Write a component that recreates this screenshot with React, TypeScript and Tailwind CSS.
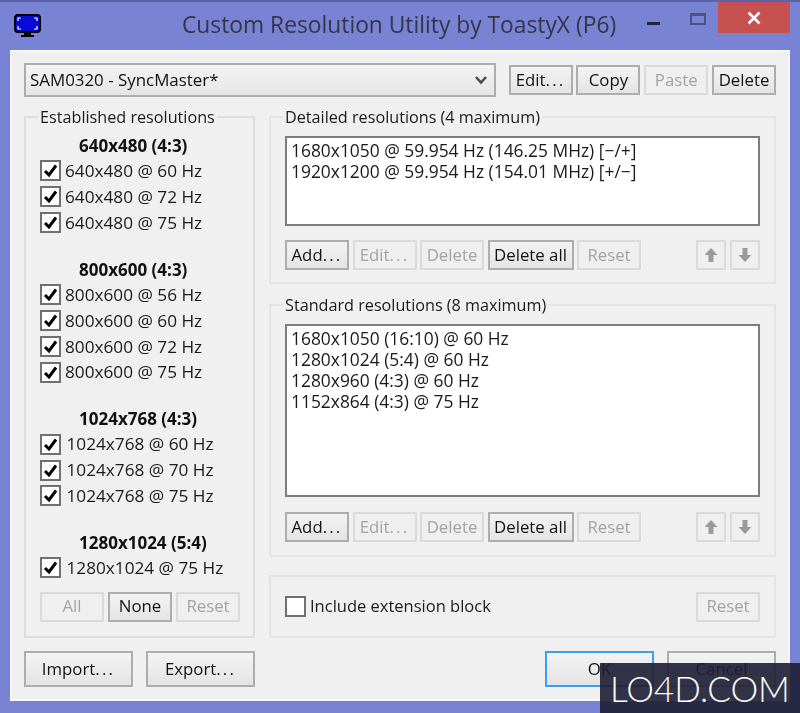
import React from "react";

const font = { fontFamily: '"Open Sans", "Noto Sans", sans-serif' };

function Btn({ w, h = "h-[30px]", label, disabled, focused, children }: { w: string; h?: string; label?: string; disabled?: boolean; focused?: boolean; children?: React.ReactNode }) {
  const tone = disabled
    ? "border-[#dadada] bg-[#efefef] text-[#a3a3a3]"
    : focused
    ? "border-[#3c9df5] bg-gradient-to-b from-[#f3f3f3] to-[#e4e4e4] text-[#111]"
    : "border-[#adadad] bg-gradient-to-b from-[#f3f3f3] to-[#e4e4e4] text-[#111]";
  const dots = label?.endsWith("...");
  return (
    <div className={`${w} ${h} ${tone} shrink-0 border-2 flex items-center justify-center text-[16.8px] leading-none`}>
      {dots ? (
        <>
          {label!.slice(0, -3)}
          <span className="tracking-[2.2px]">...</span>
        </>
      ) : (
        label
      )}
      {children}
    </div>
  );
}

function Check({ checked = true }: { checked?: boolean }) {
  return (
    <div className="w-[21px] h-[21px] shrink-0 border-2 border-[#707070] bg-white flex items-center justify-center">
      {checked && (
        <svg width="15" height="15" viewBox="0 0 15 15">
          <path d="M2 8 L6 12 L13 2.5" fill="none" stroke="#000" strokeWidth="3" />
        </svg>
      )}
    </div>
  );
}

function Row({ label, gap = "gap-[4px]" }: { label: string; gap?: string }) {
  return (
    <div className={`h-[25.9px] flex items-center ${gap} text-[17.2px] text-[#1a1a1a]`}>
      <Check />
      <span>{label}</span>
    </div>
  );
}

function Block({ title, rows, gap }: { title: string; rows: string[]; gap?: string }) {
  return (
    <div className="flex flex-col">
      <div className="h-[24px] flex items-center pl-[39px] text-[17px] font-bold text-[#111]">{title}</div>
      {rows.map((r) => (
        <Row key={r} label={r} gap={gap} />
      ))}
    </div>
  );
}

function Legend({ text }: { text: string }) {
  return <div className="-mt-[12px] w-fit px-[2px] -ml-[2px] bg-[#f0f0f0] text-[16.2px] leading-[22px] text-[#1a1a1a]">{text}</div>;
}

function Arrow({ down }: { down?: boolean }) {
  return (
    <svg width="14" height="16" viewBox="0 0 14 16" className={down ? "rotate-180" : ""}>
      <path d="M7 1 L13.5 8 H9.5 V15 H4.5 V8 H0.5 Z" fill="#9a9a9a" />
    </svg>
  );
}

function ActionRow() {
  return (
    <div className="flex gap-[3.5px]">
      <Btn w="w-[64px]" label="Add..." />
      <Btn w="w-[64px]" label="Edit..." disabled />
      <Btn w="w-[64px]" label="Delete" disabled />
      <Btn w="w-[86px]" label="Delete all" />
      <Btn w="w-[64px]" label="Reset" disabled />
      <div className="ml-auto flex gap-[4px]">
        <Btn w="w-[30px]" disabled>
          <Arrow />
        </Btn>
        <Btn w="w-[30px]" disabled>
          <Arrow down />
        </Btn>
      </div>
    </div>
  );
}

function ListBox({ h, lines }: { h: string; lines: string[] }) {
  return (
    <div className={`${h} pt-[2px] border-2 border-[#7d7d7d] bg-white px-[4px] text-[17.4px] leading-[21px] text-[#1a1a1a] whitespace-nowrap`}>
      {lines.map((l) => (
        <div key={l}>{l}</div>
      ))}
    </div>
  );
}

export default function App() {
  return (
    <div style={font} className="w-[800px] h-[713px] relative overflow-hidden bg-[#7983d3] border-t-2 border-[#5c64a8] flex flex-col">
      <div className="h-[48px] shrink-0 flex items-start pl-[14px] blur-[0.4px]">
        <svg width="28" height="24" viewBox="0 0 28 24" className="mt-[12px] shrink-0">
          <rect x="1" y="1" width="25" height="17" rx="3" fill="#0a0ad8" stroke="#000" strokeWidth="2" />
          <rect x="10" y="18" width="7" height="3" fill="#000" />
          <rect x="7" y="21" width="13" height="2" fill="#000" />
          <path d="M4 7 V4 H7 M20 4 H23 V7 M23 12 V15 H20 M7 15 H4 V12" fill="none" stroke="#fff" strokeWidth="1.2" />
        </svg>
        <div className="ml-[140px] w-[434px] mt-[7px] text-center text-[22.8px] leading-[32px] whitespace-nowrap text-[#34344a]">
          Custom Resolution Utility by ToastyX (P6)
        </div>
        <div className="ml-auto flex items-start">
          <div className="w-[13px] h-[3px] bg-[#23233a] mt-[20px]" />
          <div className="ml-[30px] mt-[11px] w-[16px] h-[12px] border-2 border-t-[3px] border-[#4d5380]" />
          <div className="ml-[12px] w-[72px] h-[31px] bg-[#c75050] flex items-center justify-center mr-[10px]">
            <svg width="14" height="14" viewBox="0 0 14 14">
              <path d="M1.5 1.5 L12.5 12.5 M12.5 1.5 L1.5 12.5" stroke="#fff" strokeWidth="2.6" />
            </svg>
          </div>
        </div>
      </div>

      <div className="ml-[10px] w-[780px] h-[651px] shrink-0 bg-[#f0f0f0] border-2 border-[#f7f8fc] pl-[12px] pr-[12px] pt-[11px] flex flex-col blur-[0.4px]">
        <div className="flex items-center">
          <div className="w-[472px] h-[34px] border-2 border-[#adadad] bg-gradient-to-b from-[#f3f3f3] to-[#e6e6e6] flex items-center justify-between pl-[4px] pr-[6px] text-[16.9px] text-[#111]">
            <span>SAM0320 - SyncMaster*</span>
            <svg width="14" height="10" viewBox="0 0 14 10">
              <path d="M2 2 L7 7.5 L12 2" fill="none" stroke="#4d4d4d" strokeWidth="2.6" />
            </svg>
          </div>
          <div className="ml-[13px] flex gap-[3.8px]">
            <Btn w="w-[64px]" label="Edit..." />
            <Btn w="w-[64px]" label="Copy" />
            <Btn w="w-[64px]" label="Paste" disabled />
            <Btn w="w-[64px]" label="Delete" />
          </div>
        </div>

        <div className="mt-[19px] flex gap-[14px]">
          <div className="w-[231px] h-[522px] shrink-0 border-2 border-[#dedede] flex flex-col px-[14px]">
            <Legend text="Established resolutions" />
            <div className="mt-[6px] flex flex-col gap-[22px]">
              <Block title="640x480 (4:3)" rows={["640x480 @ 60 Hz", "640x480 @ 72 Hz", "640x480 @ 75 Hz"]} />
              <Block title="800x600 (4:3)" rows={["800x600 @ 56 Hz", "800x600 @ 60 Hz", "800x600 @ 72 Hz", "800x600 @ 75 Hz"]} />
              <Block title="1024x768 (4:3)" rows={["1024x768 @ 60 Hz", "1024x768 @ 70 Hz", "1024x768 @ 75 Hz"]} gap="gap-[5.5px]" />
              <Block title="1280x1024 (5:4)" rows={["1280x1024 @ 75 Hz"]} gap="gap-[5.5px]" />
            </div>
            <div className="mt-[11px] flex gap-[4px]">
              <Btn w="w-[64px]" label="All" disabled />
              <Btn w="w-[64px]" label="None" />
              <Btn w="w-[64px]" label="Reset" disabled />
            </div>
          </div>

          <div className="flex-1 flex flex-col">
            <div className="h-[168px] border-2 border-[#e4e4e4] px-[14px] flex flex-col">
              <Legend text="Detailed resolutions (4 maximum)" />
              <div className="mt-[8px]">
                <ListBox h="h-[90px]" lines={["1680x1050 @ 59.954 Hz (146.25 MHz) [−/+]", "1920x1200 @ 59.954 Hz (154.01 MHz) [+/−]"]} />
              </div>
              <div className="mt-[14px]">
                <ActionRow />
              </div>
            </div>

            <div className="mt-[20px] h-[253px] border-2 border-[#e4e4e4] px-[14px] flex flex-col">
              <Legend text="Standard resolutions (8 maximum)" />
              <div className="mt-[8px]">
                <ListBox h="h-[173px]" lines={["1680x1050 (16:10) @ 60 Hz", "1280x1024 (5:4) @ 60 Hz", "1280x960 (4:3) @ 60 Hz", "1152x864 (4:3) @ 75 Hz"]} />
              </div>
              <div className="mt-[15px]">
                <ActionRow />
              </div>
            </div>

            <div className="mt-[18px] h-[63px] border-2 border-[#e4e4e4] px-[14px] flex items-center justify-between">
              <div className="flex items-center gap-[4px] text-[16.5px] text-[#1a1a1a]">
                <Check checked={false} />
                <span>Include extension block</span>
              </div>
              <Btn w="w-[64px]" label="Reset" disabled />
            </div>
          </div>
        </div>

        <div className="mt-[13px] flex">
          <Btn w="w-[109px]" h="h-[36px]" label="Import..." />
          <div className="ml-[13px]">
            <Btn w="w-[109px]" h="h-[36px]" label="Export..." />
          </div>
          <div className="ml-auto flex gap-[13px]">
            <Btn w="w-[109px]" h="h-[36px]" label="OK" focused />
            <Btn w="w-[109px]" h="h-[36px]" label="Cancel" />
          </div>
        </div>
      </div>

      <div className="absolute right-0 bottom-0 w-[200px] h-[50px] bg-[#1d1e34]/90 flex items-center justify-center text-white text-[35px] font-light leading-none" style={{ fontFamily: 'Lato, sans-serif' }}>
        LO4D.COM
      </div>
    </div>
  );
}
